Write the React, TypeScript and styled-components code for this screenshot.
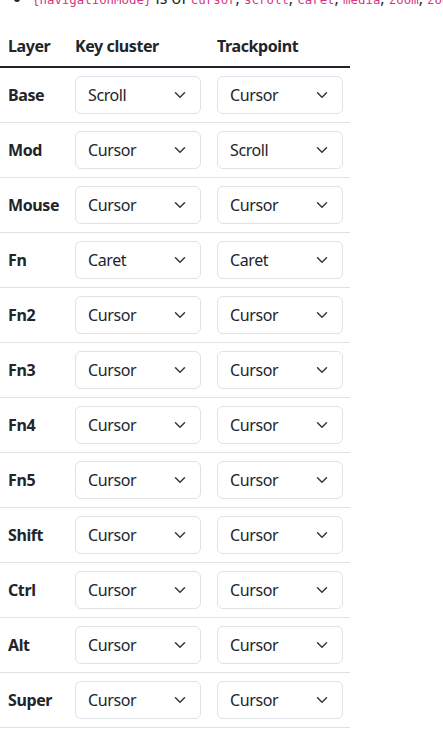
import React from "react";
import styled, { createGlobalStyle } from "styled-components";

const Global = createGlobalStyle`
  html, body { margin: 0; padding: 0; background: #fff; overflow: hidden; }
  body {
    font-family: "Noto Sans", "Open Sans", sans-serif;
    font-size: 16px;
    line-height: 1.5;
    color: #212529;
  }
`;

const Page = styled.div`
  margin-top: -14px;
  padding: 0;
`;

const List = styled.ul`
  margin: 0 0 14px 0;
  padding-left: 32px;
  white-space: nowrap;
`;

const Item = styled.li`
  line-height: 24px;
`;

const Code = styled.code`
  font-family: "DejaVu Sans Mono", "Liberation Mono", monospace;
  font-size: 12.4px;
  color: #d63384;
`;

const Table = styled.table`
  width: 350px;
  border-collapse: collapse;
  table-layout: fixed;
  letter-spacing: -0.4px;
`;

const HeadCell = styled.th<{ $w: number }>`
  width: ${(p) => p.$w}px;
  text-align: left;
  font-weight: 700;
  padding: 8px;
  line-height: 24px;
  border-bottom: 2px solid #212529;
`;

const Row = styled.tr`
  border-bottom: 1px solid #dee2e6;
`;

const LayerCell = styled.th`
  text-align: left;
  font-weight: 700;
  padding: 8px;
  vertical-align: middle;
`;

const Cell = styled.td`
  padding: 8px;
  vertical-align: middle;
`;

const SelectBox = styled.div`
  box-sizing: border-box;
  display: flex;
  align-items: center;
  justify-content: space-between;
  width: 126px;
  height: 38px;
  padding: 0 12px 0 12px;
  border: 1px solid #dee2e6;
  border-radius: 6px;
  background: #fff;
  font-size: 16px;
  color: #212529;
`;

const Chevron = () => (
  <svg width="16" height="12" viewBox="0 0 16 16" fill="none" stroke="#343a40" strokeWidth="2" strokeLinecap="round" strokeLinejoin="round">
    <path d="m2 5 6 6 6-6" />
  </svg>
);

const Select = ({ value }: { value: string }) => (
  <SelectBox>
    <span>{value}</span>
    <Chevron />
  </SelectBox>
);

const rows: [string, string, string][] = [
  ["Base", "Scroll", "Cursor"],
  ["Mod", "Cursor", "Scroll"],
  ["Mouse", "Cursor", "Cursor"],
  ["Fn", "Caret", "Caret"],
  ["Fn2", "Cursor", "Cursor"],
  ["Fn3", "Cursor", "Cursor"],
  ["Fn4", "Cursor", "Cursor"],
  ["Fn5", "Cursor", "Cursor"],
  ["Shift", "Cursor", "Cursor"],
  ["Ctrl", "Cursor", "Cursor"],
  ["Alt", "Cursor", "Cursor"],
  ["Super", "Cursor", "Cursor"],
];

export default function App() {
  return (
    <>
      <Global />
      <Page>
        <List>
          <Item>
            <Code>{"{navigationMode}"}</Code> is of <Code>cursor</Code>, <Code>scroll</Code>,{" "}
            <Code>caret</Code>, <Code>media</Code>, <Code>zoom</Code>, <Code>zoomX</Code>
          </Item>
        </List>
        <Table>
          <thead>
            <tr>
              <HeadCell $w={51}>Layer</HeadCell>
              <HeadCell $w={126}>Key cluster</HeadCell>
              <HeadCell $w={125}>Trackpoint</HeadCell>
            </tr>
          </thead>
          <tbody>
            {rows.map(([layer, key, track]) => (
              <Row key={layer}>
                <LayerCell>{layer}</LayerCell>
                <Cell>
                  <Select value={key} />
                </Cell>
                <Cell>
                  <Select value={track} />
                </Cell>
              </Row>
            ))}
          </tbody>
        </Table>
      </Page>
    </>
  );
}
